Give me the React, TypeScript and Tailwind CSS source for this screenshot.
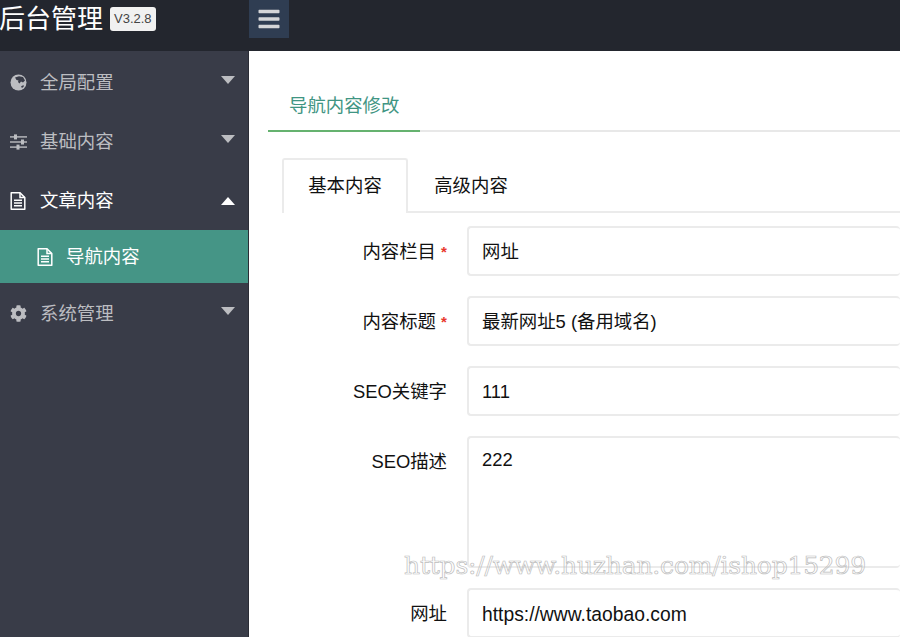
import { FaBars, FaCog } from "react-icons/fa"
import type { ReactNode } from "react"

const font = "font-['Liberation_Sans','Noto_Sans_CJK_SC',sans-serif]"

const GlobeIcon = () => (
  <svg width="17" height="17" viewBox="0 0 17 17">
    <circle cx="8.5" cy="8.5" r="8" fill="currentColor" />
    <path d="M5 3.5 L9 2.2 L13 3 L15 6.5 L13 8.5 L11 7.5 L9.5 9.5 L8 8 L8.5 6.5 L6.5 6 Z" fill="#393c48" />
    <path d="M11 12.5 L13.5 11 L13.8 12.5 L12 14 Z" fill="#393c48" />
  </svg>
)

const SlidersIcon = () => (
  <svg width="17" height="16" viewBox="0 0 17 16" fill="currentColor">
    <rect x="0" y="2.2" width="17" height="1.4" />
    <rect x="4" y="0.4" width="3" height="5" />
    <rect x="0" y="7.3" width="17" height="1.4" />
    <rect x="11" y="5.5" width="3" height="5" />
    <rect x="0" y="12.4" width="17" height="1.4" />
    <rect x="6.5" y="10.6" width="3" height="5" />
  </svg>
)

const FileIcon = () => (
  <svg width="16" height="18" viewBox="0 0 16 18" fill="none" stroke="currentColor" strokeWidth="1.5">
    <path d="M1.2 0.8 H10 L14.8 5.6 V17.2 H1.2 Z" strokeLinejoin="round" />
    <path d="M10 0.8 V5.6 H14.8" />
    <path d="M4 8.2 H12 M4 11 H12 M4 13.8 H12" strokeWidth="1.4" />
  </svg>
)

function MenuItem({ icon, label, open }: { icon: ReactNode; label: string; open?: boolean }) {
  return (
    <div className={`flex h-[59px] items-center pl-[10px] pr-[13px] ${open ? "text-white" : "text-[#bcbdc1]"}`}>
      <span className="flex w-[30px] items-center text-[17px]">{icon}</span>
      <span className="flex-1 text-[18.4px]">{label}</span>
      {open ? (
        <span className="h-0 w-0 border-x-[7.5px] border-b-[8px] border-x-transparent border-b-white" />
      ) : (
        <span className="-mt-[5px] h-0 w-0 border-x-[7.5px] border-t-[8px] border-x-transparent border-t-[#bcbdc1]" />
      )}
    </div>
  )
}

function Field({
  label,
  value,
  required,
  area,
  large,
}: {
  label: string
  value: string
  required?: boolean
  area?: boolean
  large?: boolean
}) {
  return (
    <div className="flex">
      <div className="flex h-[50px] w-[179px] shrink-0 items-center justify-end pt-[2px] text-[18.4px] text-[#111]">
        <span>{label}</span>
        {required && <span className="ml-[5px] w-[6px] text-[15px] font-bold text-[#e8372c]">*</span>}
      </div>
      <div
        className={`ml-[20px] flex-1 rounded-[4px] border-2 border-r-0 border-[#ebebeb] pl-[13px] text-[#111] ${
          large ? "text-[19.3px]" : "text-[18.4px]"
        } ${area ? "h-[132px] pt-[8px]" : `flex h-[50px] items-center ${large ? "pt-[5px]" : "pt-[2px]"}`}`}
      >
        {value}
      </div>
    </div>
  )
}

export default function App() {
  return (
    <div className={`relative h-[637px] w-[900px] overflow-hidden bg-white ${font}`}>
      {/* top bar */}
      <header className="flex h-[51px] bg-[#23262e]">
        <div className="flex h-[38px] w-[249px] shrink-0 items-center">
          <span className="-ml-[1px] text-[26px] text-white">后台管理</span>
          <span className="ml-[7px] rounded-[3px] bg-[#f1f1f1] px-[4px] py-[3px] text-[13px] leading-[18px] text-[#444]">V3.2.8</span>
        </div>
        <div className="flex h-[38px] w-[40px] items-center justify-center bg-[#2f3d52] text-[24px] text-[#d5d6d8]">
          <FaBars />
        </div>
      </header>

      <div className="flex h-[586px]">
        {/* sidebar */}
        <aside className="w-[249px] shrink-0 border-r border-r-[#2b2d36] bg-[#393c48] pt-[2px]">
          <MenuItem icon={<GlobeIcon />} label="全局配置" />
          <MenuItem icon={<SlidersIcon />} label="基础内容" />
          <MenuItem icon={<FileIcon />} label="文章内容" open />
          <div className="flex h-[53px] items-center bg-[#459586] pl-[37px] pt-[1px] text-white">
            <span className="flex w-[29px] items-center"><FileIcon /></span>
            <span className="text-[18.4px]">导航内容</span>
          </div>
          <div className="pt-[1px]">
            <MenuItem icon={<FaCog />} label="系统管理" />
          </div>
        </aside>

        {/* content */}
        <main className="flex-1 pl-[19px]">
          <div className="mt-[30px] flex h-[51px] border-b-2 border-b-[#e8e8e8]">
            <div className="-mb-[2px] w-[152px] border-b-2 border-b-[#65b26f] pl-[21px] pt-[11px] text-[18.4px] text-[#3f9583]">
              导航内容修改
            </div>
          </div>

          <div className="ml-[14px] mt-[26px] flex h-[55px] border-b-2 border-b-[#ebebeb]">
            <div className="-mb-[2px] flex h-[55px] w-[126px] items-center justify-center rounded-t-[3px] border-2 border-b-0 border-[#ebebeb] bg-white pb-[2px] text-[18.4px] text-[#111]">
              基本内容
            </div>
            <div className="flex w-[126px] items-center justify-center pt-[2px] text-[18.4px] text-[#111]">高级内容</div>
          </div>

          <div className="mt-[13px] flex flex-col gap-[20px]">
            <Field label="内容栏目" value="网址" required />
            <Field label="内容标题" value="最新网址5 (备用域名)" required />
            <Field label="SEO关键字" value="111" />
            <Field label="SEO描述" value="222" area />
            <Field label="网址" value="https://www.taobao.com" large />
          </div>
        </main>
      </div>

      {/* watermark */}
      <div className="absolute left-[404px] top-[548px] font-['DejaVu_Serif',serif] text-[25px] leading-[36px] tracking-[-0.2px] text-transparent opacity-[0.99] [-webkit-text-stroke:0.7px_#bdbdbd]">
        https://www.huzhan.com/ishop15299
      </div>
    </div>
  )
}
